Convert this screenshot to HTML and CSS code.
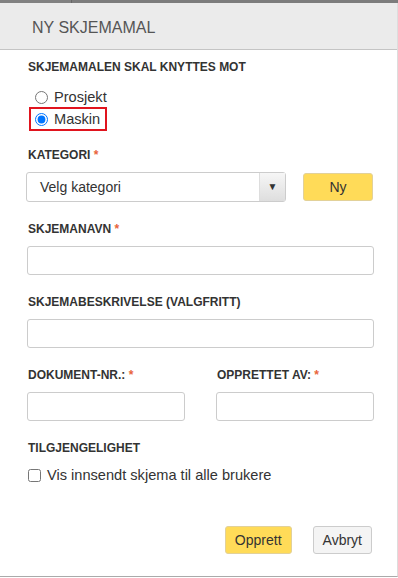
FILE: index.html
```html
<!DOCTYPE html>
<html lang="no">
<head>
    <meta charset="UTF-8">
    <meta name="viewport" content="width=device-width, initial-scale=1.0">
    <title>Ny skjemamal</title>
    <link rel="stylesheet" href="styles.css">
</head>
<body>
    <div class="backdrop-strip"><div class="strip-left"></div></div>
    <div class="modal">
        <div class="modal-header">NY SKJEMAMAL</div>
        <div class="modal-body">
            <div class="field-label">SKJEMAMALEN SKAL KNYTTES MOT</div>
            <div class="radio-group">
                <label class="radio-row">
                    <input type="radio" name="target" value="prosjekt">
                    <span>Prosjekt</span>
                </label>
                <label class="radio-row selected">
                    <input type="radio" name="target" value="maskin" checked>
                    <span>Maskin</span>
                </label>
            </div>

            <div class="form-group first">
                <div class="field-label">KATEGORI <span class="req">*</span></div>
                <div class="category-row">
                    <div class="select-box">
                        <span class="select-text">Velg kategori</span>
                        <span class="select-arrow">&#9660;</span>
                    </div>
                    <button class="btn btn-yellow btn-ny">Ny</button>
                </div>
            </div>

            <div class="form-group">
                <div class="field-label">SKJEMANAVN <span class="req">*</span></div>
                <input type="text" class="text-input">
            </div>

            <div class="form-group">
                <div class="field-label">SKJEMABESKRIVELSE (VALGFRITT)</div>
                <input type="text" class="text-input">
            </div>

            <div class="form-group two-cols">
                <div>
                    <div class="field-label">DOKUMENT-NR.: <span class="req">*</span></div>
                    <input type="text" class="text-input">
                </div>
                <div>
                    <div class="field-label">OPPRETTET AV: <span class="req">*</span></div>
                    <input type="text" class="text-input">
                </div>
            </div>

            <div class="form-group">
                <div class="field-label">TILGJENGELIGHET</div>
                <label class="check-row">
                    <input type="checkbox">
                    <span>Vis innsendt skjema til alle brukere</span>
                </label>
            </div>

            <div class="modal-footer">
                <button class="btn btn-yellow">Opprett</button>
                <button class="btn btn-grey">Avbryt</button>
            </div>
        </div>
    </div>
</body>
</html>
```

FILE: styles.css
```css
body {
    margin: 0;
    font-family: "Liberation Sans", Arial, sans-serif;
    background-color: #fff;
    color: #333;
}
.backdrop-strip {
    height: 3px;
    background-color: #7c7c7c;
}
.strip-left {
    width: 71px;
    height: 3px;
    border-right: 1px solid #666;
    background-color: #818181;
}
.modal {
    height: 573px;
    border-right: 1px solid #ddd;
    border-bottom: 1px solid #aaa;
    background-color: #fff;
}
.modal-header {
    height: 43px;
    padding: 3px 0 0 32px;
    line-height: 43px;
    background-color: #ebebeb;
    border-bottom: 1px solid #c4c4c4;
    font-size: 16px;
    color: #555;
}
.modal-body {
    padding: 10px 23px 0 27px;
}
.field-label {
    font-size: 12px;
    font-weight: bold;
    line-height: 14px;
    color: #333;
    margin-left: 1px;
}
.req {
    color: #e8643a;
}
.radio-group {
    margin-top: 13px;
    display: flex;
    flex-direction: column;
    align-items: flex-start;
}
.radio-row {
    display: flex;
    align-items: center;
    height: 20px;
    margin-left: 8px;
    font-size: 14.6px;
    color: #333;
}
.radio-row input {
    width: 13px;
    height: 13px;
    margin: 0 6px 0 0;
}
.radio-row.selected {
    margin-left: 2px;
    padding: 0 5px 0 4px;
    border: 2px solid #e0141e;
}
.form-group {
    margin-top: 20px;
}
.form-group.first {
    margin-top: 17px;
}
.form-group .field-label {
    margin-bottom: 10px;
}
.category-row {
    display: flex;
    align-items: center;
    margin-left: -1px;
}
.select-box {
    width: 258px;
    height: 28px;
    border: 1px solid #ccc;
    border-radius: 3px;
    display: flex;
    align-items: center;
    background-color: #fff;
}
.select-text {
    flex-grow: 1;
    padding-left: 13px;
    font-size: 14px;
    color: #333;
}
.select-arrow {
    width: 25px;
    height: 28px;
    border-left: 1px solid #ddd;
    background: linear-gradient(to bottom, #f6f6f6, #dedede);
    font-size: 10px;
    line-height: 28px;
    text-align: center;
    color: #333;
}
.btn-ny {
    margin-left: 17px;
    width: 70px;
    height: 28px;
}
.text-input {
    display: block;
    box-sizing: border-box;
    width: 100%;
    height: 29px;
    border: 1px solid #ccc;
    border-radius: 3px;
    margin: 0;
    font-family: inherit;
}
.two-cols {
    display: grid;
    grid-template-columns: 1fr 1fr;
    column-gap: 31px;
}
.check-row {
    display: flex;
    align-items: center;
    height: 20px;
    font-size: 14.6px;
    color: #333;
}
.check-row input {
    width: 13px;
    height: 13px;
    margin: 0 6px 0 1px;
}
.modal-footer {
    display: flex;
    justify-content: flex-end;
    gap: 21px;
    margin-top: 41px;
    padding-right: 2px;
}
.btn {
    font-family: inherit;
    font-size: 14px;
    color: #333;
    border-radius: 3px;
    padding: 0 9px;
    height: 28px;
    cursor: pointer;
}
.btn-yellow {
    background-color: #ffdb58;
    border: 1px solid #e2d199;
}
.btn-grey {
    background-color: #f4f4f4;
    border: 1px solid #ccc;
}
```
